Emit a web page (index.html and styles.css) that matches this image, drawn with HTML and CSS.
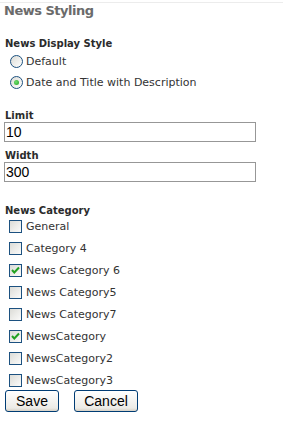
FILE: index.html
```html
<!DOCTYPE html>
<html lang="en">
<head>
  <meta charset="UTF-8">
  <title>News Styling</title>
  <link rel="stylesheet" href="styles.css">
</head>
<body>
  <div class="panel">
    <h2 class="panel-title">News Styling</h2>

    <div class="field field-style">
      <div class="field-label">News Display Style</div>
      <div class="options radios">
        <label class="option"><span class="radio"></span>Default</label>
        <label class="option"><span class="radio checked"></span>Date and Title with Description</label>
      </div>
    </div>

    <div class="field field-limit">
      <div class="field-label">Limit</div>
      <div class="textbox">10</div>
    </div>

    <div class="field field-width">
      <div class="field-label">Width</div>
      <div class="textbox">300</div>
    </div>

    <div class="field field-cats">
      <div class="field-label">News Category</div>
      <div class="options checks">
        <label class="option"><span class="check"></span>General</label>
        <label class="option"><span class="check"></span>Category 4</label>
        <label class="option"><span class="check"><svg viewBox="0 0 11 11"><path d="M2 5 L4.3 7.5 L9 2.5" /></svg></span>News Category 6</label>
        <label class="option"><span class="check"></span>News Category5</label>
        <label class="option"><span class="check"></span>News Category7</label>
        <label class="option"><span class="check"><svg viewBox="0 0 11 11"><path d="M2 5 L4.3 7.5 L9 2.5" /></svg></span>NewsCategory</label>
        <label class="option"><span class="check"></span>NewsCategory2</label>
        <label class="option"><span class="check"></span>NewsCategory3</label>
      </div>
    </div>

    <div class="buttons">
      <button class="btn btn-save">Save</button>
      <button class="btn btn-cancel">Cancel</button>
    </div>
  </div>
</body>
</html>
```

FILE: styles.css
```css
/* Base */
body {
  margin: 0;
  background: #fff;
  color: #333;
  font-family: "DejaVu Sans", Verdana, sans-serif;
  font-size: 11px;
}
.panel {
  border-top: 1px solid #ececec;
  margin-top: 2px;
  padding: 0 4px;
}
.panel-title {
  margin: 0;
  font-size: 13px;
  line-height: 16px;
  letter-spacing: -0.5px;
  color: #6b6b6b;
  font-weight: bold;
}
/* Form fields */
.field-style { margin-top: 18px; }
.field-limit { margin-top: 20px; }
.field-width { margin-top: 7px; }
.field-cats { margin-top: 22px; }
.field-label {
  font-weight: bold;
  font-size: 10px;
  line-height: 13px;
  color: #2b2b2b;
  padding-left: 1px;
}
.options {
  display: flex;
  flex-direction: column;
  gap: 8px;
}
.radios { margin-top: 5px; padding-left: 6px; }
.checks { margin-top: 3px; gap: 9px; padding-left: 5px; }
.option {
  display: flex;
  align-items: center;
  height: 13px;
  gap: 3px;
  color: #333;
  line-height: 13px;
}
.checks .option { gap: 4px; }
.textbox {
  width: 249px;
  height: 18px;
  border: 1px solid #979797;
  font-family: "Liberation Sans", Arial, sans-serif;
  font-size: 14px;
  line-height: 19px;
  color: #000;
  padding-left: 1px;
}
/* Radio buttons */
.radio {
  width: 11px;
  height: 11px;
  border: 1px solid #1c5180;
  border-radius: 50%;
  background: linear-gradient(135deg, #dcdcd6, #fff);
  position: relative;
  flex: none;
}
.radio.checked::after {
  content: "";
  position: absolute;
  left: 3px;
  top: 3px;
  width: 5px;
  height: 5px;
  border-radius: 50%;
  background: radial-gradient(circle at 40% 40%, #6fe06f, #21a121);
}
/* Checkboxes */
.check {
  width: 11px;
  height: 11px;
  border: 1px solid #1c5180;
  background: linear-gradient(135deg, #dcdcd7, #fbfbfa);
  flex: none;
}
.check svg {
  display: block;
  width: 11px;
  height: 11px;
}
.check svg path {
  fill: none;
  stroke: #21a121;
  stroke-width: 2;
}
/* Buttons */
.buttons {
  display: flex;
  gap: 15px;
  padding-left: 1px;
  margin-top: 3px;
}
.btn {
  height: 22px;
  border: 1px solid #003c74;
  border-radius: 3px;
  background: linear-gradient(#fff, #ecebe6 85%, #d6d0c5);
  font-family: "Liberation Sans", Arial, sans-serif;
  font-size: 14px;
  color: #000;
  padding: 0;
}
.btn-save { width: 54px; }
.btn-cancel { width: 64px; }
```
